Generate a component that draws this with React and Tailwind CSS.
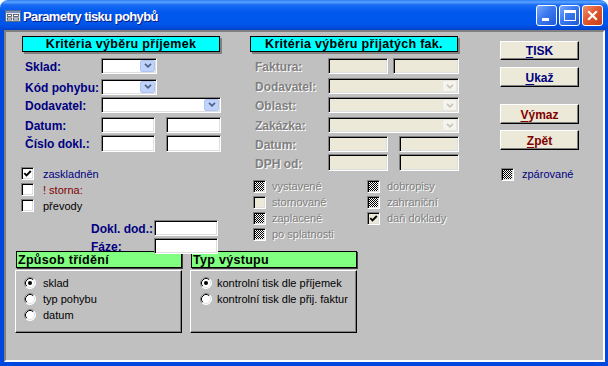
import React from "react";

const SUNKEN =
  "border border-t-[#808080] border-l-[#808080] border-r-white border-b-white shadow-[inset_1px_1px_0_#000,inset_-1px_-1px_0_#dfdfdf]";
const RAISED =
  "border border-t-white border-l-white border-r-black border-b-black shadow-[inset_-1px_-1px_0_#808080]";
const DIS = "text-[#808080] [text-shadow:1px_1px_0_#ffffff]";

function DropBtn({ disabled }) {
  return (
    <div
      className={
        disabled
          ? "w-[15px] h-[12px] rounded-[2px] bg-[#f4f3ee] border border-[#e8e6da] flex items-center justify-center"
          : "w-[15px] h-[12px] rounded-[2px] bg-[#c1d3fb] border border-[#aec4f4] flex items-center justify-center"
      }
    >
      <svg width="8" height="5" viewBox="0 0 8 5">
        <path
          d="M1 0.8 L4 3.8 L7 0.8"
          stroke={disabled ? "#c9c7ba" : "#4d6185"}
          strokeWidth="1.7"
          fill="none"
        />
      </svg>
    </div>
  );
}

function Combo({ className, disabled }) {
  return (
    <div
      className={`${SUNKEN} ${disabled ? "bg-[#ece9d8]" : "bg-white"} flex items-center justify-end pr-[1px] ${className}`}
    >
      <DropBtn disabled={disabled} />
    </div>
  );
}

function Field({ className, disabled }) {
  return <div className={`${SUNKEN} ${disabled ? "bg-[#ece9d8]" : "bg-white"} ${className}`} />;
}

function Check({ state, disabled }) {
  return (
    <div
      className={`w-[13px] h-[13px] shrink-0 ${SUNKEN} ${disabled ? "bg-[#ece9d8]" : "bg-white"} flex items-center justify-center`}
    >
      {state === "checked" && (
        <svg width="9" height="9" viewBox="0 0 9 9">
          <path d="M1.3 4.2 L3.5 6.4 L7.8 2" stroke="#000" strokeWidth="1.9" fill="none" />
        </svg>
      )}
      {state === "dither" && (
        <div className="w-[9px] h-[9px] bg-[repeating-conic-gradient(#000_0%_25%,#ffffff_0%_50%)] [background-size:2px_2px]" />
      )}
    </div>
  );
}

function Radio({ on }) {
  return (
    <svg width="12" height="12" viewBox="0 0 12 12" className="shrink-0">
      <circle cx="6" cy="6" r="5.5" fill="#fff" />
      <path d="M2.11 9.89 A5.5 5.5 0 0 1 9.89 2.11" stroke="#808080" strokeWidth="1" fill="none" />
      <path d="M9.89 2.11 A5.5 5.5 0 0 1 2.11 9.89" stroke="#ffffff" strokeWidth="1" fill="none" />
      <path d="M2.82 9.18 A4.5 4.5 0 0 1 9.18 2.82" stroke="#000" strokeWidth="1" fill="none" />
      <path d="M9.18 2.82 A4.5 4.5 0 0 1 2.82 9.18" stroke="#dfdfdf" strokeWidth="1" fill="none" />
      {on && <circle cx="6" cy="6" r="2" fill="#000" />}
    </svg>
  );
}

function Label({ className, children, disabled }) {
  return (
    <span
      className={`pt-[2px] text-[12px] font-bold leading-none whitespace-nowrap ${disabled ? DIS : "text-[#000080]"} ${className}`}
    >
      {children}
    </span>
  );
}

function CheckRow({ state, label, color, disabled, gap }) {
  return (
    <div className={`h-[16px] flex items-center ${gap}`}>
      <Check state={state} disabled={disabled} />
      <span className={`pt-[1px] text-[11px] leading-none whitespace-nowrap ${disabled ? DIS : color}`}>{label}</span>
    </div>
  );
}

function Btn({ className, children }) {
  return (
    <div
      className={`w-[79px] bg-[#ece9d8] ${RAISED} flex items-center justify-center pt-[1px] text-[12px] font-bold leading-none ${className}`}
    >
      {children}
    </div>
  );
}

function RadioRow({ on, label, gap }) {
  return (
    <div className={`h-[16px] flex items-center ${gap}`}>
      <Radio on={on} />
      <span className="pt-[1px] text-[11px] leading-none text-black whitespace-nowrap">{label}</span>
    </div>
  );
}

function TitleBar() {
  return (
    <div className="h-[30px] shrink-0 flex items-center rounded-t-[8px] bg-[linear-gradient(180deg,#2a7df6_0%,#5aa2ff_7%,#1a6cf4_16%,#0058ee_40%,#0056ea_80%,#004bdc_93%,#003fc6_100%)] pl-[5px] pr-[5px]">
      <svg width="16" height="14" viewBox="0 0 16 14" className="shrink-0 mt-[2px]">
        <rect x="0.5" y="1.5" width="15" height="11" fill="#e8e8e8" stroke="#5a6a8a" />
        <rect x="1" y="2" width="14" height="2" fill="#8090b8" />
        <rect x="2.5" y="5.5" width="4" height="2" fill="#fff" stroke="#404a60" strokeWidth="0.8" />
        <rect x="8.5" y="5.5" width="5" height="2" fill="#fff" stroke="#404a60" strokeWidth="0.8" />
        <rect x="2.5" y="9" width="4" height="2" fill="#fff" stroke="#404a60" strokeWidth="0.8" />
        <rect x="8.5" y="9" width="5" height="2" fill="#fff" stroke="#404a60" strokeWidth="0.8" />
      </svg>
      <span className="ml-[2px] mt-[3px] text-white font-bold text-[13px] tracking-[-0.6px] leading-none [text-shadow:1px_1px_0_#0a1a80]">
        Parametry tisku pohybů
      </span>
      <div className="flex-1" />
      <div className="flex gap-[2px]">
        <div className="w-[21px] h-[21px] rounded-[3px] border border-white bg-[linear-gradient(135deg,#7aaaff_0%,#3a78f0_45%,#1f5ad8_100%)] flex items-end pl-[5px] pb-[4px]">
          <div className="w-[7px] h-[3px] bg-white" />
        </div>
        <div className="w-[21px] h-[21px] rounded-[3px] border border-white bg-[linear-gradient(135deg,#7aaaff_0%,#3a78f0_45%,#1f5ad8_100%)] flex items-center justify-center">
          <div className="w-[12px] h-[11px] border border-white border-t-[3px]" />
        </div>
        <div className="w-[21px] h-[21px] rounded-[3px] border border-white bg-[linear-gradient(135deg,#f0906c_0%,#e2582f_45%,#c53f17_100%)] flex items-center justify-center">
          <svg width="11" height="11" viewBox="0 0 11 11">
            <path d="M1.2 1.2 L9.8 9.8 M9.8 1.2 L1.2 9.8" stroke="#fff" strokeWidth="2.2" />
          </svg>
        </div>
      </div>
    </div>
  );
}

function CyanHeader({ className, children }) {
  return (
    <div
      className={`h-[16px] bg-[#00ffff] border border-black shadow-[2px_2px_0_#808080] flex items-center justify-center pt-[1px] text-[12.5px] tracking-[0.3px] font-bold text-black leading-none ${className}`}
    >
      {children}
    </div>
  );
}

function GreenHeader({ children }) {
  return (
    <div className="ml-[1px] h-[17px] bg-[#80ff80] border border-black shadow-[1px_1px_0_#404040] pl-[1px] pt-[1px] flex items-center text-[12.5px] tracking-[0.3px] font-bold text-black leading-none">
      {children}
    </div>
  );
}

export default function App() {
  return (
    <div className="w-[608px] h-[366px] flex flex-col overflow-hidden font-['Liberation_Sans',Arial,sans-serif]">
      <TitleBar />
      <div className="flex-1 flex bg-[#0047e0] pl-[4px] pr-[3px] pb-[4px]">
        <div className="flex-1 flex flex-col bg-[#c0c0c0] border-2 border-t-[#808080] border-l-[#808080] border-r-white border-b-white">
          {/* top section */}
          <div className="h-[219px] shrink-0 pt-[4px] flex">
            {/* left column */}
            <div className="ml-[10px] w-[206px] flex flex-col">
              <CyanHeader className="ml-[6px] w-[198px]">Kritéria výběru příjemek</CyanHeader>
              <div className="mt-[6px] h-[16px] pl-[9px] flex items-center">
                <Label className="w-[76px]">Sklad:</Label>
                <Combo className="w-[56px] h-[16px]" />
              </div>
              <div className="mt-[5px] h-[16px] pl-[9px] flex items-center">
                <Label className="w-[76px]">Kód pohybu:</Label>
                <Combo className="w-[56px] h-[16px]" />
              </div>
              <div className="mt-[2px] h-[16px] pl-[9px] flex items-center">
                <Label className="w-[76px]">Dodavatel:</Label>
                <Combo className="w-[120px] h-[16px]" />
              </div>
              <div className="mt-[4px] h-[16px] pl-[9px] flex items-center">
                <Label className="w-[76px]">Datum:</Label>
                <Field className="w-[54px] h-[16px]" />
                <Field className="ml-[11px] w-[55px] h-[16px]" />
              </div>
              <div className="mt-[2px] h-[17px] pl-[9px] flex items-center">
                <Label className="w-[76px]">Číslo dokl.:</Label>
                <Field className="w-[54px] h-[17px]" />
                <Field className="ml-[11px] w-[55px] h-[17px]" />
              </div>
              <div className="mt-[14px] pl-[5px] flex flex-col">
                <CheckRow state="checked" label="zaskladněn" color="text-[#000080]" gap="gap-[9px]" />
                <CheckRow state="none" label="! storna:" color="text-[#800000]" gap="gap-[9px]" />
                <CheckRow state="none" label="převody" color="text-black" gap="gap-[9px]" />
              </div>
              <div className="mt-[6px] h-[16px] pl-[75px] flex items-center">
                <Label className="w-[63px]">Dokl. dod.:</Label>
                <Field className="w-[64px] h-[16px]" />
              </div>
              <div className="mt-[2px] h-[16px] pl-[75px] flex items-center">
                <Label className="w-[63px]">Fáze:</Label>
                <Field className="relative z-10 w-[64px] h-[16px]" />
              </div>
            </div>

            {/* middle column */}
            <div className="ml-[28px] w-[210px] flex flex-col">
              <CyanHeader className="w-[208px]">Kritéria výběru přijatých fak.</CyanHeader>
              <div className="mt-[6px] h-[16px] pl-[5px] flex items-center">
                <Label disabled className="w-[73px]">Faktura:</Label>
                <Field disabled className="w-[60px] h-[16px]" />
                <Field disabled className="ml-[5px] w-[66px] h-[16px]" />
              </div>
              <div className="mt-[4px] h-[16px] pl-[5px] flex items-center">
                <Label disabled className="w-[73px]">Dodavatel:</Label>
                <Combo disabled className="w-[131px] h-[16px]" />
              </div>
              <div className="mt-[3px] h-[16px] pl-[5px] flex items-center">
                <Label disabled className="w-[73px]">Oblast:</Label>
                <Combo disabled className="w-[131px] h-[16px]" />
              </div>
              <div className="mt-[4px] h-[16px] pl-[5px] flex items-center">
                <Label disabled className="w-[73px]">Zakázka:</Label>
                <Combo disabled className="w-[131px] h-[16px]" />
              </div>
              <div className="mt-[3px] h-[16px] pl-[5px] flex items-center">
                <Label disabled className="w-[73px]">Datum:</Label>
                <Field disabled className="w-[60px] h-[16px]" />
                <Field disabled className="ml-[11px] w-[60px] h-[16px]" />
              </div>
              <div className="mt-[2px] h-[17px] pl-[5px] flex items-center">
                <Label disabled className="w-[73px]">DPH od:</Label>
                <Field disabled className="w-[60px] h-[17px]" />
                <Field disabled className="ml-[11px] w-[60px] h-[17px]" />
              </div>
              <div className="mt-[7px] pl-[3px] flex">
                <div className="w-[114px] flex flex-col">
                  <CheckRow disabled state="dither" label="vystavené" gap="gap-[6px]" />
                  <CheckRow disabled state="none" label="stornované" gap="gap-[6px]" />
                  <CheckRow disabled state="dither" label="zaplacené" gap="gap-[6px]" />
                  <CheckRow disabled state="dither" label="po splatnosti" gap="gap-[6px]" />
                </div>
                <div className="flex flex-col">
                  <CheckRow disabled state="dither" label="dobropisy" gap="gap-[7px]" />
                  <CheckRow disabled state="dither" label="zahraniční" gap="gap-[7px]" />
                  <CheckRow disabled state="checked" label="daň doklady" gap="gap-[7px]" />
                </div>
              </div>
            </div>

            {/* right column */}
            <div className="ml-[40px] w-[79px] flex flex-col">
              <Btn className="mt-[5px] h-[19px] text-[#000080]">
                <span className="underline underline-offset-[2px]">T</span>ISK
              </Btn>
              <Btn className="mt-[7px] h-[20px] text-[#000080]">
                <span className="underline underline-offset-[2px]">U</span>kaž
              </Btn>
              <Btn className="mt-[17px] h-[20px] text-[#800000]">
                <span className="underline underline-offset-[2px]">V</span>ýmaz
              </Btn>
              <Btn className="mt-[6px] h-[20px] text-[#800000]">
                <span className="underline underline-offset-[2px]">Z</span>pět
              </Btn>
              <div className="mt-[16px] pl-[1px]">
                <CheckRow state="dither" label="zpárované" color="text-[#000080]" gap="gap-[8px]" />
              </div>
            </div>
          </div>

          {/* bottom section */}
          <div className="ml-[9px] flex gap-[8px]">
            <div className="w-[167px] flex flex-col">
              <GreenHeader>Způsob třídění</GreenHeader>
              <div className={`mt-[2px] h-[63px] ${RAISED} pt-[4px] pl-[8px] flex flex-col`}>
                <RadioRow on label="sklad" gap="gap-[7px]" />
                <RadioRow label="typ pohybu" gap="gap-[7px]" />
                <RadioRow label="datum" gap="gap-[7px]" />
              </div>
            </div>
            <div className="w-[167px] flex flex-col">
              <GreenHeader>Typ výstupu</GreenHeader>
              <div className={`mt-[2px] h-[63px] ${RAISED} pt-[4px] pl-[9px] flex flex-col`}>
                <RadioRow on label="kontrolní tisk dle příjemek" gap="gap-[5px]" />
                <RadioRow label="kontrolní tisk dle přij. faktur" gap="gap-[5px]" />
              </div>
            </div>
          </div>
        </div>
      </div>
    </div>
  );
}
